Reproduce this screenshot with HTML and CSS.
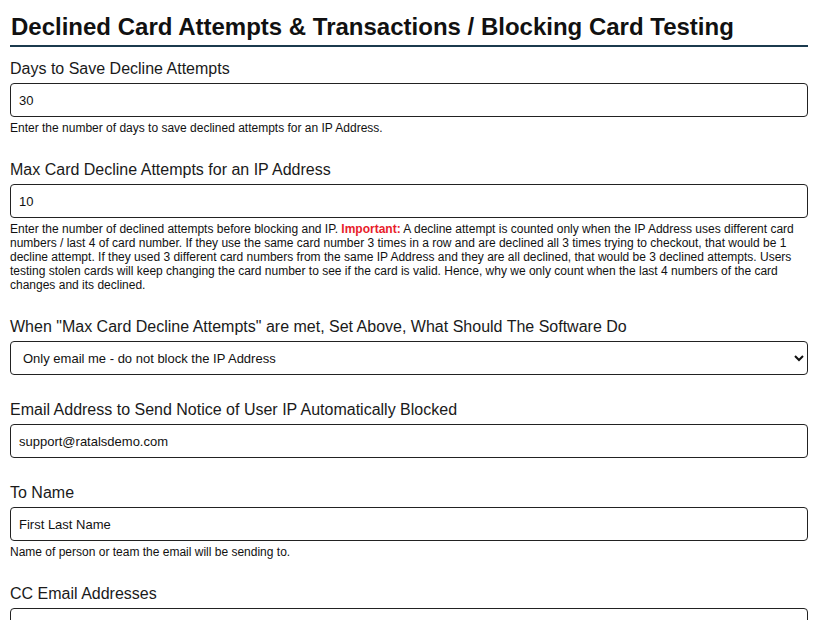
FILE: index.html
```html
<!DOCTYPE html>
<html lang="en">
<head>
<meta charset="utf-8">
<title>Declined Card Attempts</title>
<link rel="stylesheet" href="styles.css">
</head>
<body>
<div class="page">
  <h1 class="title">Declined Card Attempts &amp; Transactions / Blocking Card Testing</h1>

  <div class="group">
    <label class="label" for="days">Days to Save Decline Attempts</label>
    <input class="field" id="days" type="text" value="30">
    <p class="help">Enter the number of days to save declined attempts for an IP Address.</p>
  </div>

  <div class="group">
    <label class="label" for="max">Max Card Decline Attempts for an IP Address</label>
    <input class="field" id="max" type="text" value="10">
    <p class="help">Enter the number of declined attempts before blocking and IP. <strong class="important">Important:</strong> A decline attempt is counted only when the IP Address uses different card numbers / last 4 of card number. If they use the same card number 3 times in a row and are declined all 3 times trying to checkout, that would be 1 decline attempt. If they used 3 different card numbers from the same IP Address and they are all declined, that would be 3 declined attempts. Users testing stolen cards will keep changing the card number to see if the card is valid. Hence, why we only count when the last 4 numbers of the card changes and its declined.</p>
  </div>

  <div class="group">
    <label class="label" for="action">When "Max Card Decline Attempts" are met, Set Above, What Should The Software Do</label>
    <select class="field select" id="action">
      <option>Only email me - do not block the IP Address</option>
      <option>Block the IP Address and email me</option>
    </select>
  </div>

  <div class="group">
    <label class="label" for="email">Email Address to Send Notice of User IP Automatically Blocked</label>
    <input class="field" id="email" type="text" value="support@ratalsdemo.com">
  </div>

  <div class="group">
    <label class="label" for="toname">To Name</label>
    <input class="field" id="toname" type="text" value="First Last Name">
    <p class="help">Name of person or team the email will be sending to.</p>
  </div>

  <div class="group">
    <label class="label" for="cc">CC Email Addresses</label>
    <input class="field" id="cc" type="text" value="">
  </div>
</div>
</body>
</html>
```

FILE: styles.css
```css
* {
  box-sizing: border-box;
}

html, body {
  margin: 0;
  padding: 0;
  background: #ffffff;
}

body {
  font-family: "Liberation Sans", Arial, sans-serif;
  color: #111111;
}

.page {
  padding: 11px 10px 20px 10px;
}

.title {
  margin: 0 0 13px 0;
  padding: 2px 0 4px 1px;
  font-size: 24px;
  font-weight: bold;
  line-height: normal;
  color: #111111;
  border-bottom: 2px solid #1b3a4e;
}

.group {
  margin-bottom: 26px;
}

.label {
  display: block;
  font-size: 16px;
  line-height: normal;
  color: #1a1a1a;
  margin: 0 0 5px 0;
}

.field {
  display: block;
  width: 100%;
  height: 34px;
  padding: 0 8px;
  font-family: "Liberation Sans", Arial, sans-serif;
  font-size: 13px;
  color: #111111;
  background: #ffffff;
  border: 1px solid #222222;
  border-radius: 4px;
  outline: none;
}

.select {
  padding-left: 8px;
}

.help {
  margin: 4px 0 0 0;
  font-size: 12px;
  line-height: normal;
  color: #111111;
}

.important {
  color: #e8202a;
  font-weight: bold;
}
```
